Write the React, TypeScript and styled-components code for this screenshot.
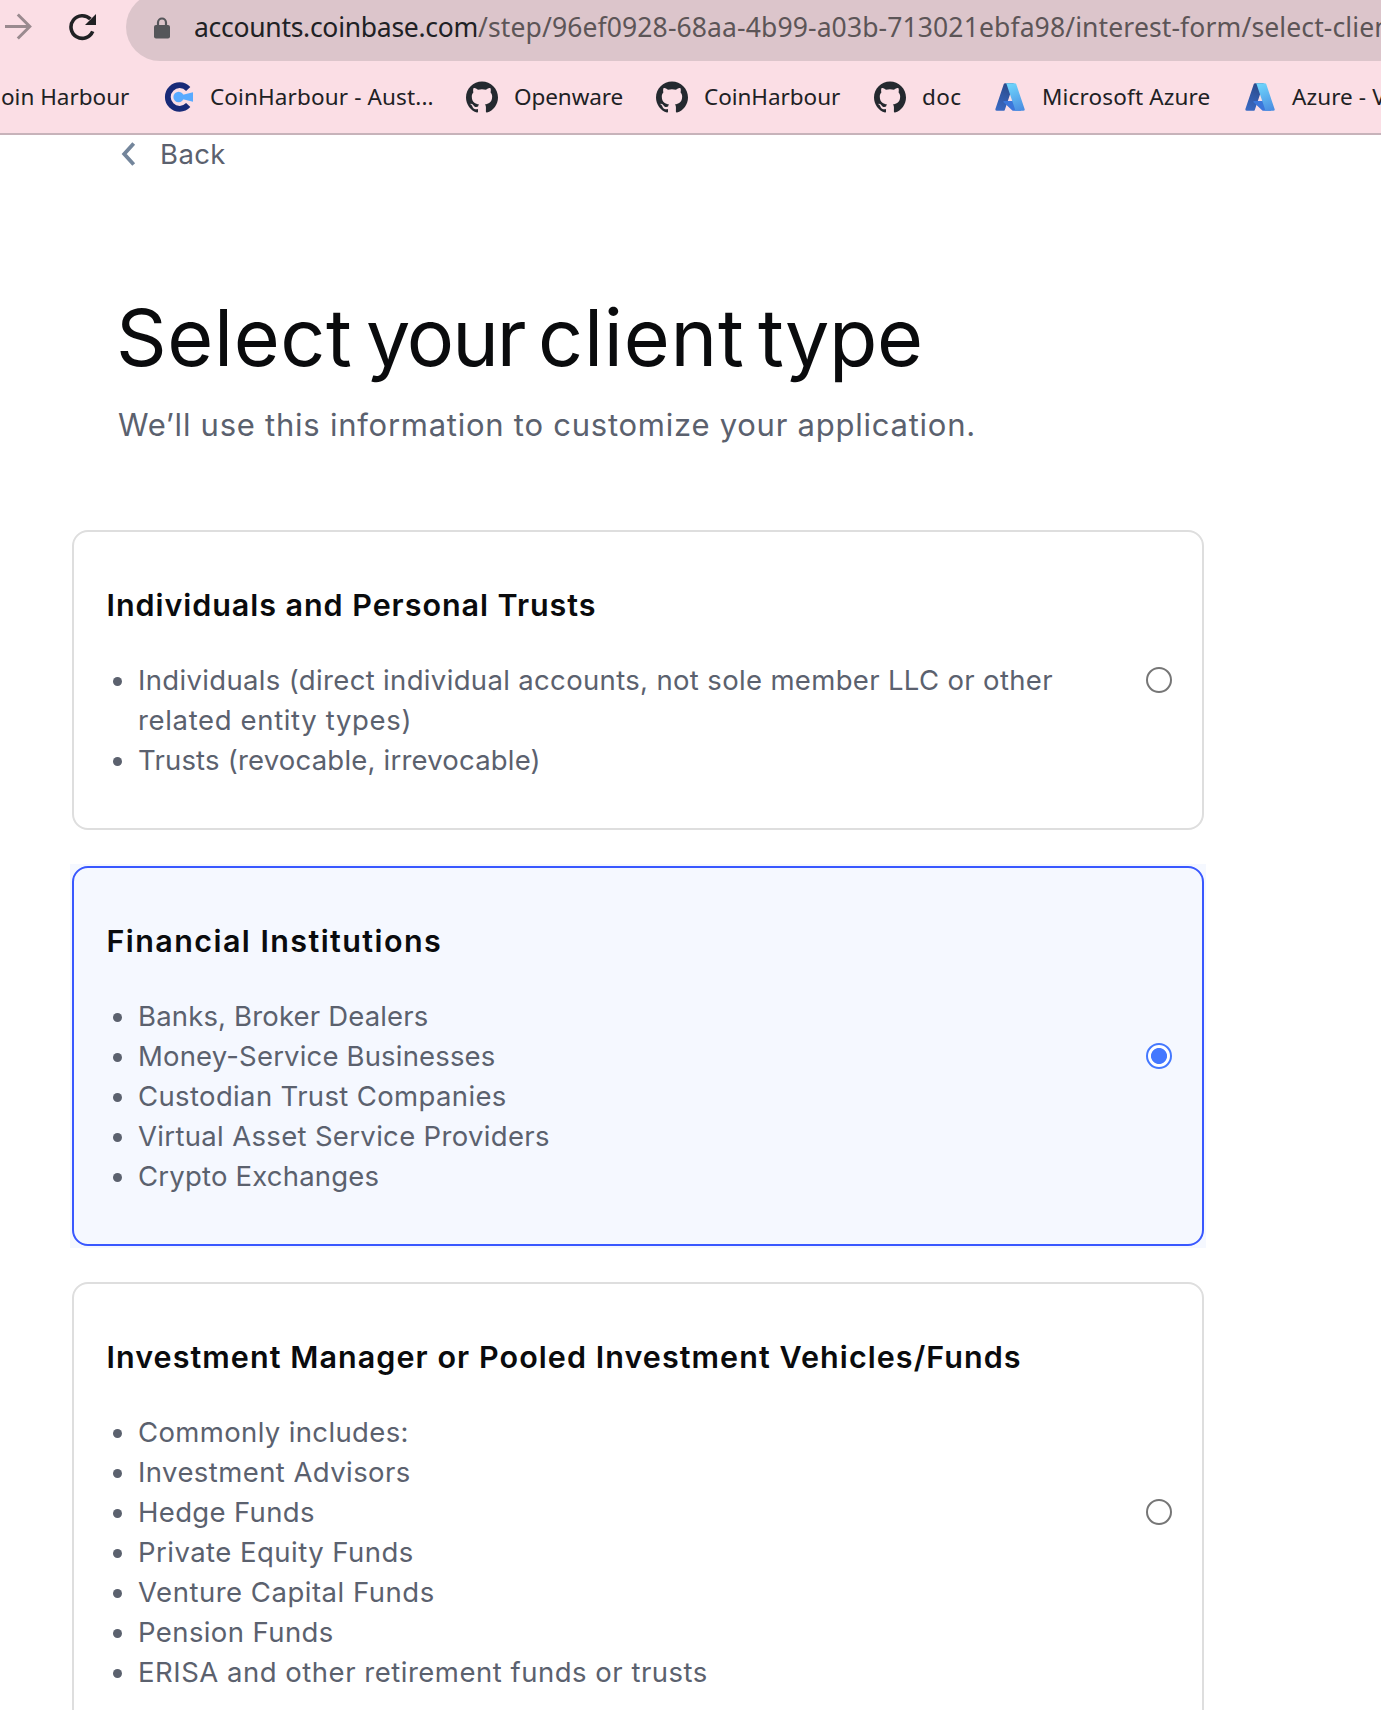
import React, { useState } from 'react';
import styled, { createGlobalStyle } from 'styled-components';
import { SiGithub } from 'react-icons/si';

const ui = '"Noto Sans", "Open Sans", sans-serif';
const brand = 'Inter, "Liberation Sans", sans-serif';

const GlobalStyle = createGlobalStyle`
  * { box-sizing: border-box; }
  body { margin: 0; background: #fff; }
`;

const Window = styled.div`
  height: 1710px;
  overflow: hidden;
  display: flex;
  flex-direction: column;
`;

/* Browser chrome */

const Chrome = styled.header`
  flex: none;
  height: 135px;
  background: #fbdee5;
  border-bottom: 2px solid #c7b3ba;
  overflow: hidden;
  font-family: ${ui};
`;

const Toolbar = styled.div`
  display: flex;
  align-items: center;
  height: 68px;
  margin-top: -7px;
`;

const NavIcon = styled.svg<{ $gap: number }>`
  flex: none;
  display: block;
  margin-right: ${p => p.$gap}px;
`;

const AddressBar = styled.div`
  display: flex;
  align-items: center;
  flex: none;
  width: 1400px;
  height: 68px;
  padding-left: 28px;
  border-radius: 34px;
  background: #dcc5cb;
  font-size: 26.5px;
  line-height: 66px;
  white-space: nowrap;
`;

const Host = styled.span`
  color: #202124;
  letter-spacing: -0.28px;
`;

const Path = styled.span`
  color: #5c5557;
  letter-spacing: 0.12px;
`;

const BookmarkBar = styled.nav`
  display: flex;
  align-items: center;
  height: 72px;
  padding-left: 1px;
`;

const Bookmark = styled.span<{ $width: number; $tracking?: number }>`
  display: flex;
  align-items: center;
  gap: 16px;
  flex: none;
  width: ${p => p.$width}px;
  font-size: 22.5px;
  line-height: 32px;
  letter-spacing: ${p => p.$tracking ?? 0}px;
  color: #202124;
  white-space: nowrap;

  svg { flex: none; display: block; }
`;

/* Page */

const Page = styled.main`
  flex: 1;
  display: flex;
  flex-direction: column;
  padding-left: 70px;
  font-family: ${brand};
`;

const BackLink = styled.a`
  display: flex;
  align-items: center;
  gap: 24px;
  height: 38px;
  padding-left: 51px;
  font-size: 27.5px;
  letter-spacing: 0.4px;
  color: #5b616e;

  svg { flex: none; }
`;

const Heading = styled.h1`
  margin: 116px 0 0;
  padding-left: 46px;
  font-size: 79px;
  line-height: 96px;
  font-weight: 400;
  word-spacing: -8.8px;
  color: #0a0b0d;
`;

const Word = styled.span<{ $tracking: number }>`
  letter-spacing: ${p => p.$tracking}px;
`;

const Subtitle = styled.p`
  margin: 16px 0 79px;
  padding-left: 48px;
  font-size: 31px;
  line-height: 48px;
  letter-spacing: 0.75px;
  color: #5b616e;
`;

const OptionList = styled.div`
  display: flex;
  flex-direction: column;
  gap: 32px;
  width: 1136px;
`;

const OptionFrame = styled.label<{ $selected: boolean }>`
  display: block;
  padding: 2px;
  background: ${p => (p.$selected ? '#f5f8ff' : 'transparent')};
`;

const OptionCard = styled.div<{ $selected: boolean }>`
  display: flex;
  align-items: center;
  justify-content: space-between;
  padding: 53px 30px 48px 32.5px;
  border: 2px solid ${p => (p.$selected ? '#3958ff' : '#dedede')};
  border-radius: 16px;
`;

const OptionTitle = styled.h2<{ $tracking: number }>`
  margin: 0 0 35px;
  font-size: 30.5px;
  line-height: 40px;
  font-weight: 600;
  letter-spacing: ${p => p.$tracking}px;
  color: #0a0b0d;
`;

const Examples = styled.ul`
  margin: 0;
  padding: 0;
  list-style: none;
  font-size: 27.5px;
  line-height: 40px;
  color: #5b616e;
`;

const Example = styled.li`
  display: grid;
  grid-template-columns: 9px auto;
  column-gap: 15px;
  margin-left: 6.5px;

  &::before {
    content: '';
    width: 9px;
    height: 9px;
    margin-top: 17px;
    border-radius: 50%;
    background: #5b616e;
  }
`;

const Line = styled.span<{ $tracking: number }>`
  display: block;
  grid-column: 2;
  padding-left: 1px;
  letter-spacing: ${p => p.$tracking}px;
  white-space: nowrap;
`;

const Radio = styled.input`
  appearance: none;
  flex: none;
  width: 26px;
  height: 26px;
  margin: 0 0 5px;
  border: 2px solid #767676;
  border-radius: 50%;
  background: #fff;

  &:checked {
    border-color: #4478ff;
    background: radial-gradient(circle, #4478ff 7.6px, #fff 8.4px);
  }
`;

const ForwardIcon = () => (
  <NavIcon $gap={35} width="34" height="34" viewBox="0 0 34 34" fill="none" stroke="#9a8a8f" strokeWidth="3">
    <path d="M5 16.5H29.5M17.8 4.5L29.8 16.5L17.8 28.5" />
  </NavIcon>
);

const ReloadIcon = () => (
  <NavIcon $gap={29} width="28" height="28" viewBox="0 0 28 28">
    <path d="M23.7 18.4A11.3 11.3 0 1 1 21.4 6.1" fill="none" stroke="#202124" strokeWidth="3.6" />
    <path d="M27 1V12H16Z" fill="#202124" />
  </NavIcon>
);

const LockSvg = styled.svg`
  flex: none;
  margin: 1px 24px 0 0;
`;

const LockIcon = () => (
  <LockSvg width="16" height="22" viewBox="0 0 16 22">
    <path d="M4 10V5.5a4 4 0 0 1 8 0V10" fill="none" stroke="#55565a" strokeWidth="2.2" />
    <rect y="8" width="16" height="13.5" rx="2" fill="#55565a" />
  </LockSvg>
);

const HarbourIcon = () => (
  <svg width="32" height="32" viewBox="0 0 32 32">
    <path d="M26.2 7.9A11.8 11.8 0 1 0 26.2 24.1" fill="none" stroke="#182a78" strokeWidth="5.8" />
    <circle cx="16.6" cy="16" r="5.2" fill="#58aaff" />
    <path d="M18 14.6L31 11.2V20.8L18 17.4Z" fill="#58aaff" />
  </svg>
);

const GithubIcon = () => <SiGithub size={32} color="#24292f" />;

const AzureIcon = ({ id }: { id: string }) => (
  <svg width="32" height="32" viewBox="0 0 96 96">
    <defs>
      <linearGradient id={`${id}-left`} x1="0.6" y1="0" x2="0.3" y2="1">
        <stop offset="0" stopColor="#2b4a8b" />
        <stop offset="1" stopColor="#3969c2" />
      </linearGradient>
      <linearGradient id={`${id}-right`} x1="0.4" y1="0" x2="0.7" y2="1">
        <stop offset="0" stopColor="#6ed3fb" />
        <stop offset="1" stopColor="#4b8fe2" />
      </linearGradient>
    </defs>
    <path fill={`url(#${id}-left)`} d="M33.338 6.544h26.038l-27.03 80.087a4.152 4.152 0 0 1-3.933 2.824H8.149a4.145 4.145 0 0 1-3.928-5.47L29.404 9.368a4.152 4.152 0 0 1 3.934-2.825z" />
    <path fill="#3b76da" d="M71.175 60.261h-41.29a1.911 1.911 0 0 0-1.305 3.309l26.532 24.764a4.171 4.171 0 0 0 2.846 1.121h23.38z" />
    <path fill={`url(#${id}-right)`} d="M66.595 9.364a4.145 4.145 0 0 0-3.928-2.82H33.648a4.146 4.146 0 0 1 3.928 2.82l25.184 74.62a4.146 4.146 0 0 1-3.928 5.472h29.02a4.146 4.146 0 0 0 3.927-5.472z" />
  </svg>
);

type TrackedLine = [text: string, tracking: number];

interface Option {
  title: string;
  tracking: number;
  examples: TrackedLine[][];
}

const options: Option[] = [
  {
    title: 'Individuals and Personal Trusts',
    tracking: 0.95,
    examples: [
      [
        ['Individuals (direct individual accounts, not sole member LLC or other', 0.34],
        ['related entity types)', 0.65],
      ],
      [['Trusts (revocable, irrevocable)', 0.2]],
    ],
  },
  {
    title: 'Financial Institutions',
    tracking: 1.42,
    examples: [
      [['Banks, Broker Dealers', 0.16]],
      [['Money-Service Businesses', 0.17]],
      [['Custodian Trust Companies', 0.36]],
      [['Virtual Asset Service Providers', 0.33]],
      [['Crypto Exchanges', 0.2]],
    ],
  },
  {
    title: 'Investment Manager or Pooled Investment Vehicles/Funds',
    tracking: 1.06,
    examples: [
      [['Commonly includes:', 0.36]],
      [['Investment Advisors', 0.42]],
      [['Hedge Funds', 0.33]],
      [['Private Equity Funds', 0.47]],
      [['Venture Capital Funds', 0.51]],
      [['Pension Funds', 0.4]],
      [['ERISA and other retirement funds or trusts', 0.51]],
    ],
  },
];

export default function App() {
  const [selected, setSelected] = useState(1);

  return (
    <>
      <GlobalStyle />
      <Window>
        <Chrome>
          <Toolbar>
            <ForwardIcon />
            <ReloadIcon />
            <AddressBar>
              <LockIcon />
              <Host>accounts.coinbase.com</Host>
              <Path>/step/96ef0928-68aa-4b99-a03b-713021ebfa98/interest-form/select-client</Path>
            </AddressBar>
          </Toolbar>
          <BookmarkBar>
            <Bookmark $width={161}>oin Harbour</Bookmark>
            <Bookmark $width={304} $tracking={0.13}><HarbourIcon />CoinHarbour - Aust...</Bookmark>
            <Bookmark $width={190} $tracking={-0.09}><GithubIcon />Openware</Bookmark>
            <Bookmark $width={218} $tracking={-0.05}><GithubIcon />CoinHarbour</Bookmark>
            <Bookmark $width={120} $tracking={0.4}><GithubIcon />doc</Bookmark>
            <Bookmark $width={250} $tracking={0.16}><AzureIcon id="azure-a" />Microsoft Azure</Bookmark>
            <Bookmark $width={250} $tracking={0.1}><AzureIcon id="azure-b" />Azure - V</Bookmark>
          </BookmarkBar>
        </Chrome>
        <Page>
          <BackLink>
            <svg width="15" height="24" viewBox="0 0 15 24" fill="none" stroke="#73859b" strokeWidth="3.8">
              <path d="M12.7 1.5L3.2 12L12.7 22.5" />
            </svg>
            Back
          </BackLink>
          <Heading>
            <Word $tracking={0.59}>Select</Word> <Word $tracking={-1.98}>your</Word>{' '}
            <Word $tracking={0.77}>client</Word> <Word $tracking={-0.39}>type</Word>
          </Heading>
          <Subtitle>We’ll use this information to customize your application.</Subtitle>
          <OptionList>
            {options.map((option, i) => (
              <OptionFrame key={option.title} $selected={i === selected}>
                <OptionCard $selected={i === selected}>
                  <div>
                    <OptionTitle $tracking={option.tracking}>{option.title}</OptionTitle>
                    <Examples>
                      {option.examples.map(lines => (
                        <Example key={lines[0][0]}>
                          {lines.map(([text, tracking]) => (
                            <Line key={text} $tracking={tracking}>{text}</Line>
                          ))}
                        </Example>
                      ))}
                    </Examples>
                  </div>
                  <Radio type="radio" name="client-type" checked={i === selected} onChange={() => setSelected(i)} />
                </OptionCard>
              </OptionFrame>
            ))}
          </OptionList>
        </Page>
      </Window>
    </>
  );
}
